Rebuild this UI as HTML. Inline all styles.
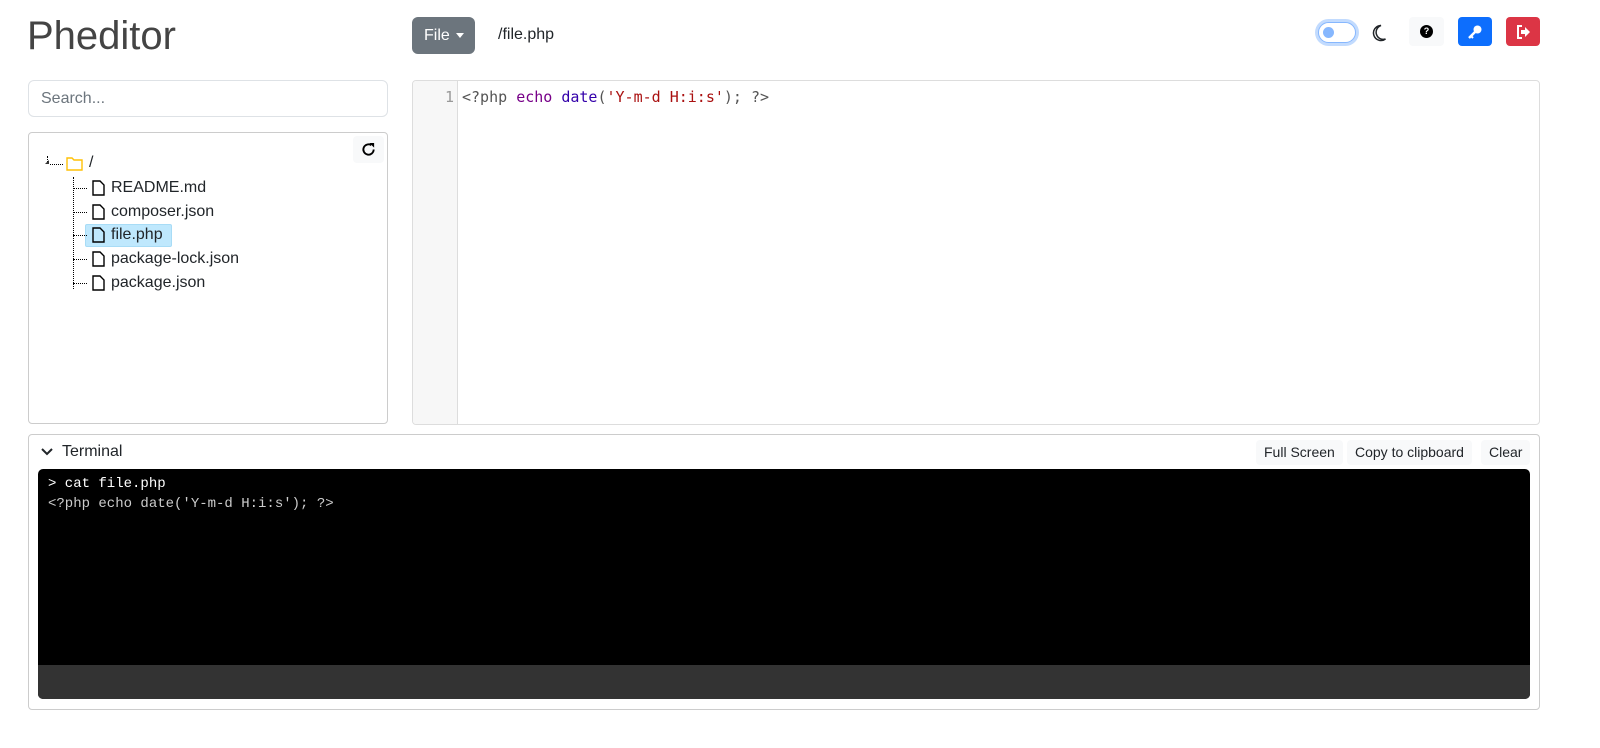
<!DOCTYPE html>
<html style="overflow:hidden;width:1600px;height:748px"><head><meta charset="utf-8"><style>
*{box-sizing:border-box;margin:0;padding:0}
body{width:1600px;height:748px;background:#fff;font-family:"Liberation Sans",sans-serif;color:#212529;position:relative;overflow:hidden}
.a{position:absolute}
.mono{font-family:"DejaVu Sans Mono","Liberation Mono",monospace}
.tb{position:absolute;top:440px;height:25px;background:#f8f9fa;border-radius:4px;font-size:14px;line-height:25px;padding:0 8px;color:#212529}
.fi{position:absolute;left:92px;font-size:16px;display:flex;align-items:center;height:22px}
.fi svg{margin-right:6px}
</style></head><body>
<div class="a" style="left:27px;top:14px;font-size:40px;color:#444">Pheditor</div>
<div class="a" style="left:412px;top:17px;width:63px;height:37px;background:#6c757d;border-radius:6px;color:#fff;font-size:16px;line-height:37px;padding-left:12px">File <span style="display:inline-block;border-left:4px solid transparent;border-right:4px solid transparent;border-top:5px solid #fff;vertical-align:middle;margin-left:2px"></span></div>
<div class="a" style="left:498px;top:26px;font-size:16px">/file.php</div>
<div class="a" style="left:1318px;top:22px;width:38px;height:21px;border-radius:11px;border:1px solid #86b7fe;box-shadow:0 0 0 3px #c2dbfe;background:#fff"><div class="a" style="left:4px;top:4px;width:11px;height:11px;border-radius:50%;background:#86b7fe"></div></div>
<svg class="a" style="left:1371px;top:24px" width="16" height="18" viewBox="0 0 16 18"><path d="M10 1.5A7.5 7.5 0 1 0 14.5 15 6.5 6.5 0 0 1 10 1.5z" fill="none" stroke="#212529" stroke-width="1.5"/></svg>
<div class="a" style="left:1409px;top:17px;width:35px;height:29px;background:#f8f9fa;border-radius:4px"><div class="a" style="left:11px;top:8px;width:13px;height:13px;border-radius:50%;background:#000;color:#fff;font-size:9px;font-weight:bold;text-align:center;line-height:13px">?</div></div>
<div class="a" style="left:1458px;top:17px;width:34px;height:29px;background:#0d6efd;border-radius:4px"><svg class="a" style="left:9px;top:7px" width="16" height="16" viewBox="0 0 16 16"><circle cx="10.5" cy="5.5" r="4" fill="#fff"/><path d="M8 8L2 14" stroke="#fff" stroke-width="2.5"/><path d="M4 12l2 2" stroke="#fff" stroke-width="2"/></svg></div>
<div class="a" style="left:1506px;top:17px;width:34px;height:29px;background:#dc3545;border-radius:4px"><svg class="a" style="left:9px;top:7px" width="16" height="16" viewBox="0 0 16 16"><path d="M7 2H3v12h4" fill="none" stroke="#fff" stroke-width="2"/><path d="M6 6h4V3l5 5-5 5v-3H6z" fill="#fff"/></svg></div>
<div class="a" style="left:28px;top:80px;width:360px;height:37px;border:1px solid #dee2e6;border-radius:6px;font-size:16px;color:#6c757d;padding:9px 12px">Search...</div>
<div class="a" style="left:28px;top:132px;width:360px;height:292px;border:1px solid #ccc;border-radius:4px"></div>
<div class="a" style="left:353px;top:136px;width:31px;height:27px;background:#f8f9fa;border-radius:4px"><svg class="a" style="left:8px;top:6px" width="15" height="15" viewBox="0 0 16 16"><path d="M13.5 8A5.5 5.5 0 1 1 11 3.4" fill="none" stroke="#000" stroke-width="2"/><path d="M9 1h5v5z" fill="#000"/></svg></div>
<div class="a" style="left:47px;top:156px;height:8px;border-left:1px dotted #000"></div>
<div class="a" style="left:45px;top:160px;border-left:4px solid transparent;border-bottom:4px solid #333;width:0"></div>
<div class="a" style="left:50px;top:164px;width:13px;border-top:1px dotted #000"></div>
<svg class="a" style="left:66px;top:157px" width="17" height="14" viewBox="0 0 17 14"><path d="M1 1h5l2 2h8v10H1z" fill="none" stroke="#ffc107" stroke-width="1.4"/></svg>
<div class="a" style="left:89px;top:154px;font-size:16px">/</div>
<div class="a" style="left:73px;top:177px;height:112px;border-left:1px dotted #000"></div>
<div class="a" style="left:85px;top:224px;width:87px;height:23px;background:#bfe8fd;border:1px solid #a8dcf6;border-radius:2px"></div>
<div class="a" style="left:73px;top:188px;width:14px;border-top:1px dotted #000"></div>
<div class="a" style="left:73px;top:212px;width:14px;border-top:1px dotted #000"></div>
<div class="a" style="left:73px;top:235px;width:14px;border-top:1px dotted #000"></div>
<div class="a" style="left:73px;top:259px;width:14px;border-top:1px dotted #000"></div>
<div class="a" style="left:73px;top:283px;width:14px;border-top:1px dotted #000"></div>
<div class="fi" style="top:177px"><svg width="13" height="16" viewBox="0 0 13 16"><path d="M1 1h7l4 4v10H1z" fill="none" stroke="#000" stroke-width="1.4"/></svg>README.md</div>
<div class="fi" style="top:201px"><svg width="13" height="16" viewBox="0 0 13 16"><path d="M1 1h7l4 4v10H1z" fill="none" stroke="#000" stroke-width="1.4"/></svg>composer.json</div>
<div class="fi" style="top:224px"><svg width="13" height="16" viewBox="0 0 13 16"><path d="M1 1h7l4 4v10H1z" fill="none" stroke="#000" stroke-width="1.4"/></svg>file.php</div>
<div class="fi" style="top:248px"><svg width="13" height="16" viewBox="0 0 13 16"><path d="M1 1h7l4 4v10H1z" fill="none" stroke="#000" stroke-width="1.4"/></svg>package-lock.json</div>
<div class="fi" style="top:272px"><svg width="13" height="16" viewBox="0 0 13 16"><path d="M1 1h7l4 4v10H1z" fill="none" stroke="#000" stroke-width="1.4"/></svg>package.json</div>
<div class="a" style="left:412px;top:80px;width:1128px;height:345px;border:1px solid #ddd;border-radius:4px;overflow:hidden">
<div class="a" style="left:0;top:0;width:45px;height:100%;background:#f7f7f7;border-right:1px solid #ddd"></div>
<div class="a mono" style="left:0;top:7px;width:41px;text-align:right;font-size:15px;color:#999">1</div>
<div class="a mono" style="left:49px;top:7px;font-size:15px;color:#555;white-space:pre">&lt;?php <span style="color:#708">echo</span> <span style="color:#30a">date</span>(<span style="color:#a11">'Y-m-d H:i:s'</span>); ?&gt;</div>
</div>
<div class="a" style="left:28px;top:434px;width:1512px;height:276px;border:1px solid #ccc;border-radius:4px"></div>
<svg class="a" style="left:41px;top:447px" width="12" height="10" viewBox="0 0 12 10"><path d="M1 2l5 5 5-5" fill="none" stroke="#212529" stroke-width="2"/></svg>
<div class="a" style="left:62px;top:443px;font-size:16px">Terminal</div>
<div class="tb" style="left:1256px">Full Screen</div>
<div class="tb" style="left:1347px">Copy to clipboard</div>
<div class="tb" style="left:1481px">Clear</div>
<div class="a" style="left:38px;top:469px;width:1492px;height:230px;background:#000;border-radius:5px;overflow:hidden">
<div class="a" style="left:0;top:196px;width:100%;height:34px;background:#333"></div>
<div class="a" style="left:10px;top:7px;font-family:'Liberation Mono',monospace;font-size:14px;color:#fff;white-space:pre">&gt; cat file.php</div>
<div class="a" style="left:10px;top:27px;font-family:'Liberation Mono',monospace;font-size:14px;color:#ccc;white-space:pre">&lt;?php echo date('Y-m-d H:i:s'); ?&gt;</div>
</div>
</body></html>
